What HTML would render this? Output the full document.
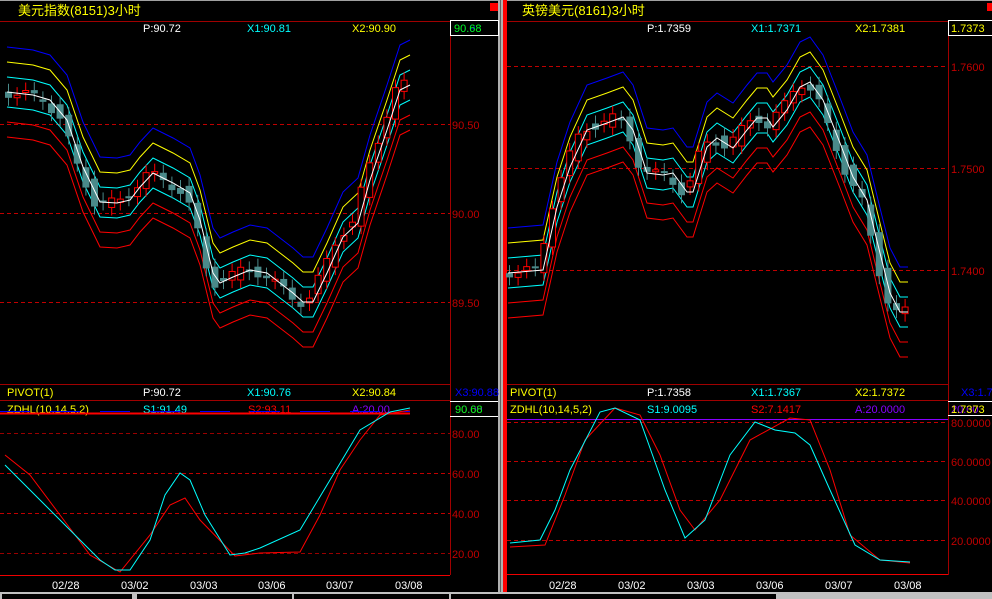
<!DOCTYPE html>
<html><head><meta charset="utf-8"><style>
html,body{margin:0;padding:0;background:#000;width:992px;height:599px;overflow:hidden}
svg{display:block}
text{font-family:"Liberation Sans","Noto Sans CJK SC",sans-serif;font-size:11px}
</style></head><body>
<svg id="s" width="992" height="599" xmlns="http://www.w3.org/2000/svg">
<rect width="992" height="599" fill="#000"/>
<line x1="0" y1="0.5" x2="992" y2="0.5" stroke="#a0a0a0"/>
<rect x="498" y="0" width="5" height="592" fill="#b0b0b0"/>
<rect x="500" y="0" width="1" height="592" fill="#606060"/>
<rect x="503" y="0" width="4" height="592" fill="#f00"/>
<rect x="490" y="3" width="8" height="8" fill="#f00"/>
<rect x="987" y="3" width="5" height="8" fill="#f00"/>
<text x="18" y="15" fill="#ff0" style="font-size:13px">美元指数(8151)3小时</text>
<text x="522" y="15" fill="#ff0" style="font-size:13px">英镑美元(8161)3小时</text>
<g stroke="#a00000" fill="none">
<line x1="0" y1="21.5" x2="498" y2="21.5"/><line x1="507" y1="21.5" x2="992" y2="21.5"/>
<line x1="450.5" y1="21" x2="450.5" y2="575"/><line x1="948.5" y1="21" x2="948.5" y2="575"/>
<line x1="0" y1="384.5" x2="450" y2="384.5"/><line x1="507" y1="384.5" x2="948" y2="384.5"/>
<line x1="0" y1="400.5" x2="450" y2="400.5"/><line x1="507" y1="400.5" x2="948" y2="400.5"/>
<line x1="0" y1="575.5" x2="450" y2="575.5" stroke="#e00"/><line x1="507" y1="574.5" x2="948" y2="574.5" stroke="#e00"/>
</g>
<g stroke="#c00000" stroke-dasharray="4,3">
<line x1="0" y1="124.5" x2="450" y2="124.5"/><line x1="0" y1="213.5" x2="450" y2="213.5"/><line x1="0" y1="302.5" x2="450" y2="302.5"/>
<line x1="507" y1="66.5" x2="948" y2="66.5"/><line x1="507" y1="168.5" x2="948" y2="168.5"/><line x1="507" y1="270.5" x2="948" y2="270.5"/>
<line x1="0" y1="433.5" x2="450" y2="433.5" stroke="#900"/><line x1="0" y1="473.5" x2="450" y2="473.5"/><line x1="0" y1="513.5" x2="450" y2="513.5"/><line x1="0" y1="553.5" x2="450" y2="553.5" stroke="#900"/>
<line x1="507" y1="422.5" x2="948" y2="422.5"/><line x1="507" y1="461.5" x2="948" y2="461.5"/><line x1="507" y1="500.5" x2="948" y2="500.5"/><line x1="507" y1="540.5" x2="948" y2="540.5"/>
</g>
<g fill="#c00000">
<text x="452" y="129">90.50</text><text x="452" y="218">90.00</text><text x="452" y="307">89.50</text>
<text x="951" y="71">1.7600</text><text x="951" y="173">1.7500</text><text x="951" y="275">1.7400</text>
<text x="452" y="438">80.00</text><text x="452" y="478">60.00</text><text x="452" y="518">40.00</text><text x="452" y="558">20.00</text>
<text x="951" y="427">80.0000</text><text x="951" y="466">60.0000</text><text x="951" y="505">40.0000</text><text x="951" y="545">20.0000</text>
</g>
<text x="143" y="32" fill="#fff">P:90.72</text><text x="247" y="32" fill="#0ff">X1:90.81</text><text x="352" y="32" fill="#ff0">X2:90.90</text>
<text x="647" y="32" fill="#fff">P:1.7359</text><text x="751" y="32" fill="#0ff">X1:1.7371</text><text x="855" y="32" fill="#ff0">X2:1.7381</text>
<rect x="450.5" y="20.5" width="48" height="15" fill="#000" stroke="#fff"/><text x="454" y="32" fill="#00f">90.98</text><text x="454" y="32" fill="#0f0">90.68</text>
<rect x="948.5" y="20.5" width="44" height="15" fill="#000" stroke="#fff"/><text x="951" y="32" fill="#ff0">1.7373</text>
<text x="7" y="396" fill="#ff0">PIVOT(1)</text><text x="143" y="396" fill="#fff">P:90.72</text><text x="247" y="396" fill="#0ff">X1:90.76</text><text x="352" y="396" fill="#ff0">X2:90.84</text><text x="455" y="396" fill="#00f">X3:90.88</text>
<text x="510" y="396" fill="#ff0">PIVOT(1)</text><text x="647" y="396" fill="#fff">P:1.7358</text><text x="751" y="396" fill="#0ff">X1:1.7367</text><text x="855" y="396" fill="#ff0">X2:1.7372</text><text x="961" y="396" fill="#00f">X3:1.7</text>
<line x1="450" y1="401.5" x2="498" y2="401.5" stroke="#fff"/><line x1="450" y1="416.5" x2="498" y2="416.5" stroke="#fff"/>
<line x1="948" y1="401.5" x2="992" y2="401.5" stroke="#fff"/><line x1="948" y1="415.5" x2="992" y2="415.5" stroke="#fff"/>
<text x="455" y="413" fill="#80f">90.00</text><text x="455" y="413" fill="#0f0">90.68</text>
<text x="951" y="413" fill="#80f">20.00</text><text x="951" y="413" fill="#ff0">1.7373</text>
<text x="7" y="413" fill="#ff0">ZDHL(10,14,5,2)</text><text x="143" y="413" fill="#0ff">S1:91.49</text><text x="248" y="413" fill="#f00">S2:93.11</text><text x="352" y="413" fill="#80f">A:20.00</text>
<text x="510" y="413" fill="#ff0">ZDHL(10,14,5,2)</text><text x="647" y="413" fill="#0ff">S1:9.0095</text><text x="751" y="413" fill="#f00">S2:7.1417</text><text x="855" y="413" fill="#80f">A:20.0000</text>
<line x1="0" y1="413.5" x2="410" y2="413.5" stroke="#f00" stroke-width="2"/>
<line x1="0" y1="411.5" x2="410" y2="411.5" stroke="#00f" stroke-dasharray="30,20"/>
<line x1="507" y1="419.5" x2="948" y2="419.5" stroke="#80f"/>
<g fill="#fff"><text x="52" y="589">02/28</text><text x="121" y="589">03/02</text><text x="190" y="589">03/03</text><text x="258" y="589">03/06</text><text x="326" y="589">03/07</text><text x="395" y="589">03/08</text>
<text x="549" y="589">02/28</text><text x="618" y="589">03/02</text><text x="687" y="589">03/03</text><text x="756" y="589">03/06</text><text x="825" y="589">03/07</text><text x="894" y="589">03/08</text></g>
<rect x="0" y="592" width="992" height="7" fill="#c0c0c0"/>
<rect x="2" y="594" width="130" height="5" fill="#000"/><rect x="137" y="594" width="155" height="5" fill="#000"/><rect x="294" y="594" width="155" height="5" fill="#000"/><rect x="451" y="594" width="325" height="5" fill="#000"/>
</svg>
<script>
var s=document.getElementById('s'),NS='http://www.w3.org/2000/svg';
function el(n,a){var e=document.createElementNS(NS,n);for(var k in a)e.setAttribute(k,a[k]);s.appendChild(e);return e}
function interp(p,x){for(var i=0;i<p.length-1;i++){if(x<=p[i+1][0]){var t=(x-p[i][0])/(p[i+1][0]-p[i][0]);return p[i][1]+t*(p[i+1][1]-p[i][1])}}return p[p.length-1][1]}
function line(p,c,off){el('polyline',{points:p.map(function(q){return q[0]+','+(q[1]+off)}).join(' '),fill:'none',stroke:c,'stroke-width':1})}
function chart(c){
 var x0=c[0][0],x1=c[c.length-1][0],i=0;
 line(c,'#f00',45);line(c,'#f00',30);line(c,'#0ff',15);line(c,'#0ff',-15);line(c,'#ff0',-30);line(c,'#00f',-45);
 for(var x=x0-2;x<=x1-4;x+=8.6,i++){
  var y=interp(c,x)+Math.sin(i*1.7)*5;var y2=interp(c,x+9)+Math.cos(i*1.3)*5;
  var up=y2<y;var top=Math.min(y,y2),h=Math.max(2,Math.abs(y2-y));
  el('line',{x1:x+3.5,y1:top-8,x2:x+3.5,y2:top+h+8,stroke:up?'#f00':'#4a8a8a'});
  if(up)el('rect',{x:x+0.5,y:top,width:6,height:h,fill:'#000',stroke:'#f00'});
  else el('rect',{x:x,y:top,width:7,height:h,fill:'#4a8a8a'});
 }
 line(c,'#fff',0);
}
var Lc=[[7,92],[33,95],[50,100],[67,120],[83,167],[100,202],[117,203],[130,200],[140,187],[153,173],[173,183],[190,193],[200,220],[213,273],[220,283],[233,277],[250,270],[267,273],[280,283],[293,293],[303,302],[313,302],[327,273],[343,237],[358,223],[370,180],[387,130],[400,90],[410,85]];
var Rc=[[508,273],[543,270],[557,207],[570,167],[587,130],[607,123],[623,117],[633,130],[647,173],[663,175],[673,173],[687,192],[693,192],[707,147],[717,138],[733,148],[747,130],[757,118],[767,118],[773,127],[787,110],[800,87],[810,82],[823,100],[840,143],[853,177],[867,200],[880,253],[890,293],[900,312],[908,312]];
chart(Lc);chart(Rc);
function pl(a,c){el('polyline',{points:a.map(function(q){return q.join(',')}).join(' '),fill:'none',stroke:c})}
pl([[5,455],[30,475],[60,515],[90,555],[120,572],[150,535],[170,505],[185,498],[200,520],[235,556],[260,553],[300,552],[320,515],[340,470],[360,440],[380,415],[410,410]],'#f00');
pl([[5,465],[40,500],[70,530],[100,560],[115,570],[130,570],[150,540],[165,495],[180,473],[190,480],[205,515],[230,555],[245,553],[260,548],[300,530],[330,480],[360,430],[390,412],[410,408]],'#0ff');
pl([[510,547],[545,545],[565,495],[585,440],[615,408],[640,415],[660,455],[680,510],[695,530],[720,500],[750,440],[790,418],[810,420],[830,470],[850,535],[880,560],[910,563]],'#f00');
pl([[510,543],[540,540],[555,510],[570,470],[600,412],[615,408],[640,420],[665,490],[685,538],[705,520],[730,455],[755,422],[775,430],[795,433],[810,445],[830,490],[855,545],[880,560],[910,562]],'#0ff');
</script>
</body></html>
